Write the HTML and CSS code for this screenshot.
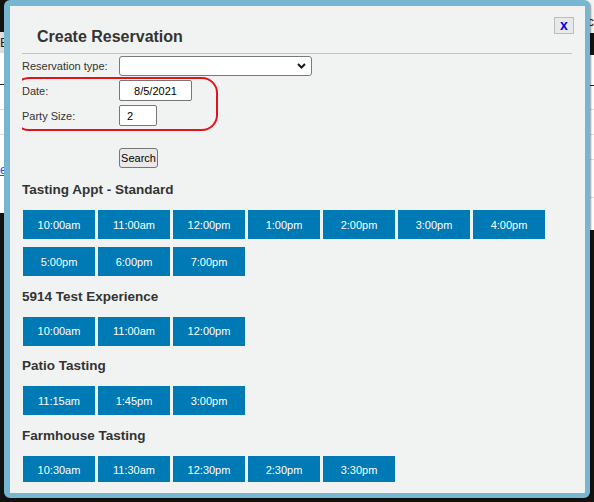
FILE: index.html
```html
<!DOCTYPE html>
<html>
<head>
<meta charset="utf-8">
<title>Create Reservation</title>
<link rel="stylesheet" href="styles.css">
</head>
<body>
<div class="backdrop">
  <div class="bg-col bg-left">
    <div class="band dark h32"></div>
    <div class="band grey h21"><span class="bg-text">Bu</span></div>
    <div class="band white-block">
      <div class="bg-line dark-line h32"></div>
      <div class="bg-line h25"></div>
      <div class="bg-line h25"></div>
      <div class="bg-link-row"><a class="bg-link">edit</a></div>
    </div>
    <div class="band dark fill"></div>
  </div>
  <div class="bg-col bg-right">
    <div class="band light h33"><span class="bg-text right">c</span></div>
    <div class="band dark h22"></div>
    <div class="band white-block tall">
      <div class="bg-line dark-line h31"></div>
      <div class="bg-line h24"></div>
      <div class="bg-line h25"></div>
      <div class="bg-line h25"></div>
      <div class="bg-line h38"></div>
    </div>
    <div class="band dark fill"></div>
  </div>
</div>

<div class="dialog">
  <div class="titlebar">
    <h1 class="title">Create Reservation</h1>
    <button class="close" type="button">x</button>
  </div>
  <div class="content">
    <div class="form">
      <div class="row row-type">
        <label class="label">Reservation type:</label>
        <div class="select-wrap">
          <select class="type"><option></option></select>
          <svg class="chev" width="9" height="6" viewBox="0 0 9 6"><polyline points="1,1 4.5,4.5 8,1" fill="none" stroke="#1a1a1a" stroke-width="2"/></svg>
        </div>
      </div>
      <div class="row">
        <label class="label">Date:</label>
        <input class="date" type="text" value="8/5/2021">
      </div>
      <div class="row">
        <label class="label">Party Size:</label>
        <input class="party" type="text" value="2">
      </div>
      <div class="search-row">
        <button class="search" type="button">Search</button>
      </div>
      <div class="highlight"></div>
    </div>

    <div class="section first">
      <h2 class="sec-title">Tasting Appt - Standard</h2>
      <div class="slots">
        <button class="slot">10:00am</button>
        <button class="slot">11:00am</button>
        <button class="slot">12:00pm</button>
        <button class="slot">1:00pm</button>
        <button class="slot">2:00pm</button>
        <button class="slot">3:00pm</button>
        <button class="slot">4:00pm</button>
        <button class="slot">5:00pm</button>
        <button class="slot">6:00pm</button>
        <button class="slot">7:00pm</button>
      </div>
    </div>
    <div class="section">
      <h2 class="sec-title">5914 Test Experience</h2>
      <div class="slots">
        <button class="slot">10:00am</button>
        <button class="slot">11:00am</button>
        <button class="slot">12:00pm</button>
      </div>
    </div>
    <div class="section">
      <h2 class="sec-title">Patio Tasting</h2>
      <div class="slots">
        <button class="slot">11:15am</button>
        <button class="slot">1:45pm</button>
        <button class="slot">3:00pm</button>
      </div>
    </div>
    <div class="section">
      <h2 class="sec-title">Farmhouse Tasting</h2>
      <div class="slots">
        <button class="slot">10:30am</button>
        <button class="slot">11:30am</button>
        <button class="slot">12:30pm</button>
        <button class="slot">2:30pm</button>
        <button class="slot">3:30pm</button>
      </div>
    </div>
  </div>
</div>
</body>
</html>
```
FILE: styles.css
```css
* { box-sizing: border-box; }
html, body { margin: 0; padding: 0; }
body {
  width: 594px;
  height: 502px;
  overflow: hidden;
  position: relative;
  background: #111311;
  font-family: "Liberation Sans", Arial, sans-serif;
}

/* page behind the modal */
.backdrop { display: flex; height: 502px; }
.bg-col { flex: 1; display: flex; flex-direction: column; }
.band { flex: none; position: relative; overflow: hidden; }
.dark { background: #111311; }
.grey { background: #dedede; }
.light { background: #f4f4f4; }
.h21 { height: 21px; }
.h22 { height: 22px; }
.h32 { height: 32px; }
.h33 { height: 33px; }
.fill { flex: 1; }
.white-block { background: #fff; height: 160px; display: flex; flex-direction: column; }
.white-block.tall { height: 175px; }
.bg-line { flex: none; border-bottom: 1px solid #dcdcdc; }
.bg-line.dark-line { border-bottom-color: #222; }
.h24 { height: 24px; }
.h25 { height: 25px; }
.h31 { height: 31px; }
.h38 { height: 38px; }
.bg-link-row { padding-top: 28px; font-size: 12px; }
.bg-link { color: #1a4fd6; text-decoration: underline; }
.bg-text { display: block; font-size: 13px; line-height: 21px; color: #222; padding-left: 0; }
.bg-text.right { text-align: right; line-height: 44px; }

/* modal */
.dialog {
  position: absolute;
  left: 4px;
  top: 0;
  width: 586px;
  height: 498px;
  border-style: solid;
  border-color: #77b6d1;
  border-width: 6px 5px 5px 6px;
  border-radius: 6px;
  background: #f1f3f2;
  display: flex;
  flex-direction: column;
  padding: 0 13px 11px 12px;
  box-shadow: 1px 1px 2px rgba(0, 0, 0, 0.4);
}

.titlebar {
  flex: none;
  height: 48px;
  display: flex;
  justify-content: space-between;
  align-items: flex-start;
  border-bottom: 1px solid #c3c3c3;
}
.title {
  margin: 21px 0 0 15px;
  font-size: 16px;
  line-height: 20px;
  font-weight: bold;
  color: #333;
}
.close {
  margin: 11px -2px 0 0;
  width: 20px;
  height: 17px;
  padding: 0;
  border: 1px solid #bdbdbd;
  background: #e8e9e9;
  color: #0000f2;
  font-family: "Liberation Sans", Arial, sans-serif;
  font-weight: bold;
  font-size: 14px;
  line-height: 13px;
  text-align: center;
}

.content { flex: 1; overflow: hidden; }

.form { position: relative; margin-top: 2px; }
.row {
  display: flex;
  align-items: center;
  font-size: 11px;
  color: #333;
}
.row + .row { margin-top: 4px; }
.row-type { margin-bottom: 1px; }
.label { width: 97px; flex: none; }

.select-wrap { position: relative; width: 193px; height: 20px; }
.type {
  appearance: none;
  -webkit-appearance: none;
  width: 193px;
  height: 20px;
  margin: 0;
  padding: 0 4px;
  border: 1px solid #7a7a7a;
  border-radius: 3px;
  background: #fff;
  font-family: "Liberation Sans", Arial, sans-serif;
  font-size: 11px;
}
.chev { position: absolute; right: 6px; top: 7px; pointer-events: none; }

.date, .party {
  height: 21px;
  margin: 0;
  border: 1px solid #767676;
  border-radius: 2px;
  background: #fff;
  color: #000;
  font-family: "Liberation Sans", Arial, sans-serif;
  font-size: 11px;
}
.date { width: 73px; padding: 0; text-align: center; }
.party { width: 38px; padding: 0 0 0 7px; }

.search-row { margin-top: 22px; padding-left: 97px; }
.search {
  display: block;
  width: 39px;
  height: 20px;
  margin: 0;
  padding: 0;
  border: 1px solid #767676;
  border-radius: 3px;
  background: #e9e9e9;
  color: #000;
  font-family: "Liberation Sans", Arial, sans-serif;
  font-size: 11px;
}

.highlight {
  position: absolute;
  left: -9px;
  top: 21px;
  width: 205px;
  height: 54px;
  border: 2px solid #e3131e;
  border-radius: 16px;
  pointer-events: none;
}

.sec-title {
  margin: 12.5px 0 12px;
  font-size: 13.5px;
  line-height: 16px;
  font-weight: bold;
  color: #333;
}
.section.first .sec-title { margin-top: 14px; }

.slots {
  display: flex;
  flex-wrap: wrap;
  gap: 8px 3px;
  padding-left: 1px;
}
.slot {
  width: 72px;
  height: 29px;
  margin: 0;
  padding: 0;
  border: 0;
  background: #007ab4;
  color: #fff;
  font-family: "Liberation Sans", Arial, sans-serif;
  font-size: 11px;
}
```
